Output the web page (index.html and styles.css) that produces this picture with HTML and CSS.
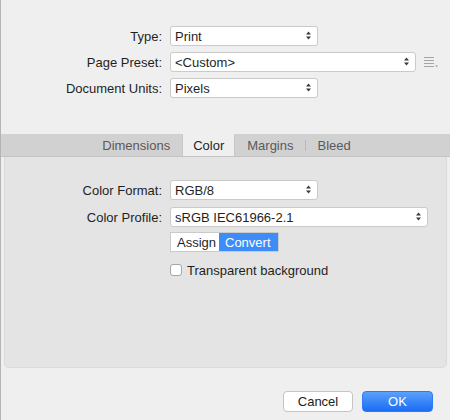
FILE: index.html
```html
<!DOCTYPE html>
<html>
<head>
<meta charset="utf-8">
<link rel="stylesheet" href="styles.css">
</head>
<body>
<div class="window">
  <div class="top">
    <div class="row">
      <span class="label">Type:</span>
      <div class="select w-short">Print<svg class="arrows" width="5" height="9" viewBox="0 0 5 9"><path d="M2.5 0.5 L5 3.5 L0 3.5 Z M0 5.5 L5 5.5 L2.5 8.5 Z"/></svg></div>
    </div>
    <div class="row">
      <span class="label">Page Preset:</span>
      <div class="select w-preset">&lt;Custom&gt;<svg class="arrows" width="5" height="9" viewBox="0 0 5 9"><path d="M2.5 0.5 L5 3.5 L0 3.5 Z M0 5.5 L5 5.5 L2.5 8.5 Z"/></svg></div>
      <svg class="menu-icon" width="15" height="11" viewBox="0 0 15 11"><path d="M0 0.5 H10 M0 3.5 H10 M0 6.5 H10 M0 9.5 H10" stroke="#a4a4a4" stroke-width="1"/><path d="M11 8.5 L14 8.5 L12.5 10.5 Z" fill="#a4a4a4"/></svg>
    </div>
    <div class="row">
      <span class="label">Document Units:</span>
      <div class="select w-short">Pixels<svg class="arrows" width="5" height="9" viewBox="0 0 5 9"><path d="M2.5 0.5 L5 3.5 L0 3.5 Z M0 5.5 L5 5.5 L2.5 8.5 Z"/></svg></div>
    </div>
  </div>

  <div class="tabbar">
    <div class="tab">Dimensions</div>
    <div class="tab active">Color</div>
    <div class="tab sep">Margins</div>
    <div class="tab">Bleed</div>
  </div>

  <div class="panel">
    <div class="row">
      <span class="label">Color Format:</span>
      <div class="select w-short">RGB/8<svg class="arrows" width="5" height="9" viewBox="0 0 5 9"><path d="M2.5 0.5 L5 3.5 L0 3.5 Z M0 5.5 L5 5.5 L2.5 8.5 Z"/></svg></div>
    </div>
    <div class="row r2">
      <span class="label">Color Profile:</span>
      <div class="select w-profile">sRGB IEC61966-2.1<svg class="arrows" width="5" height="9" viewBox="0 0 5 9"><path d="M2.5 0.5 L5 3.5 L0 3.5 Z M0 5.5 L5 5.5 L2.5 8.5 Z"/></svg></div>
    </div>
    <div class="row r3">
      <span class="label"></span>
      <div class="segmented">
        <span class="seg">Assign</span>
        <span class="seg on">Convert</span>
      </div>
    </div>
    <div class="row r4">
      <span class="label"></span>
      <span class="checkbox"></span>
      <span class="check-text">Transparent background</span>
    </div>
  </div>

  <div class="footer">
    <button class="btn cancel">Cancel</button>
    <button class="btn ok">OK</button>
  </div>
</div>
</body>
</html>
```
FILE: styles.css
```css
html, body {
  margin: 0;
  padding: 0;
}
body {
  width: 450px;
  height: 420px;
  background: #efefef;
  font-family: "Liberation Sans", Arial, sans-serif;
  font-size: 13px;
  color: #1f1f1f;
  overflow: hidden;
}
.window {
  height: 420px;
  border-left: 1px solid #b4b4b4;
  box-sizing: border-box;
  display: flex;
  flex-direction: column;
}
.top {
  padding-top: 26px;
  display: flex;
  flex-direction: column;
  gap: 6px;
}
.row {
  display: flex;
  align-items: center;
  height: 20px;
}
.label {
  width: 161px;
  text-align: right;
  margin-right: 8px;
  flex: none;
}
.panel .label {
  width: 157px;
}
.select {
  position: relative;
  height: 20px;
  box-sizing: border-box;
  background: #fff;
  border: 1px solid #cacaca;
  border-radius: 3px;
  padding-left: 4px;
  line-height: 19px;
  flex: none;
}
.arrows {
  position: absolute;
  right: 6px;
  top: 4px;
  fill: #3a3a3a;
}
.w-short { width: 148px; }
.w-preset { width: 246px; }
.w-profile { width: 258px; }
.menu-icon {
  margin-left: 8px;
  margin-top: 1px;
}
.tabbar {
  margin-top: 36px;
  height: 23px;
  box-sizing: border-box;
  background: #d1d1d1;
  border-bottom: 1px solid #c3c3c3;
  display: flex;
  justify-content: center;
  padding-left: 2px;
}
.tab {
  height: 22px;
  line-height: 23px;
  padding: 0 12px;
  color: #5a5a5a;
  position: relative;
}
.tab.active {
  background: #efefef;
  color: #1f1f1f;
  padding: 0 10px;
  border-left: 1px solid #c8c8c8;
  border-right: 1px solid #c8c8c8;
}
.tab.sep::after {
  content: "";
  position: absolute;
  right: 0;
  top: 6px;
  height: 11px;
  width: 1px;
  background: #b9b9b9;
}
.panel {
  margin: 0 3px;
  height: 211px;
  box-sizing: border-box;
  background: #e4e4e4;
  border: 1px solid #dadada;
  border-top: none;
  border-radius: 0 0 5px 5px;
  padding-top: 23px;
}
.panel .r2 { margin-top: 7px; }
.panel .r3 { margin-top: 5px; }
.panel .r4 { margin-top: 12px; height: 12px; }
.segmented {
  display: flex;
  height: 20px;
  box-sizing: border-box;
  border: 1px solid #cacaca;
  background: #fff;
}
.seg {
  line-height: 19px;
  padding: 0 5px;
}
.seg:first-child {
  width: 48px;
  box-sizing: border-box;
  padding-left: 6px;
}
.seg.on {
  background: #3d8cf7;
  color: #fff;
  width: 59px;
  box-sizing: border-box;
  padding-left: 6px;
}
.checkbox {
  width: 12px;
  height: 12px;
  box-sizing: border-box;
  border: 1px solid #a6a6a6;
  border-radius: 3px;
  background: #fff;
  flex: none;
}
.check-text {
  margin-left: 5px;
}
.footer {
  display: flex;
  justify-content: flex-end;
  gap: 9px;
  padding-right: 17px;
  margin-top: 23px;
}
.btn {
  height: 21px;
  box-sizing: border-box;
  font-family: "Liberation Sans", Arial, sans-serif;
  font-size: 13px;
  border-radius: 4px;
  padding: 0;
  line-height: 19px;
}
.cancel {
  width: 70px;
  background: #fff;
  border: 1px solid #c4c4c4;
  color: #222;
}
.ok {
  width: 71px;
  border: 1px solid #2d7cf6;
  background: linear-gradient(#5aa0fb, #1a6df5);
  color: #fff;
}
```
